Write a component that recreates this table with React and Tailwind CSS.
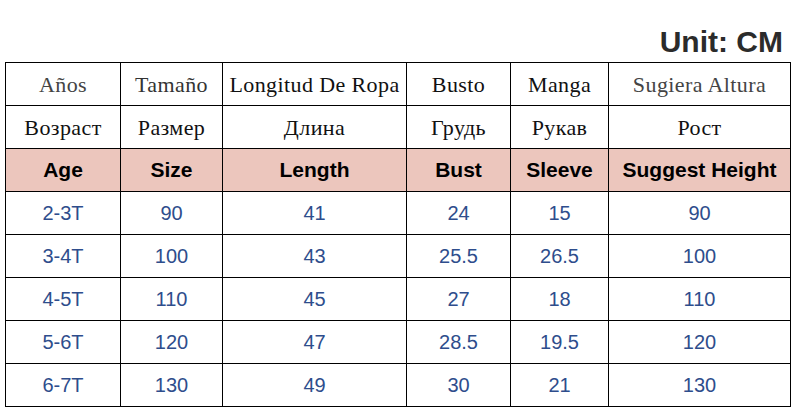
const spanish = ["Años", "Tamaño", "Longitud De Ropa", "Busto", "Manga", "Sugiera Altura"];
const russian = ["Возраст", "Размер", "Длина", "Грудь", "Рукав", "Рост"];
const english = ["Age", "Size", "Length", "Bust", "Sleeve", "Suggest Height"];

const rows = [
  ["2-3T", "90", "41", "24", "15", "90"],
  ["3-4T", "100", "43", "25.5", "26.5", "100"],
  ["4-5T", "110", "45", "27", "18", "110"],
  ["5-6T", "120", "47", "28.5", "19.5", "120"],
  ["6-7T", "130", "49", "30", "21", "130"],
];

const cell = "h-[43px] border-r border-b border-black flex items-center justify-center whitespace-nowrap";

function SerifRow({ items, tone }) {
  return items.map((t, i) => (
    <div
      key={t}
      className={`${cell} font-['Liberation_Serif',serif] text-[22px] tracking-[0.4px] ${tone[i]}`}
    >
      {t}
    </div>
  ));
}

export default function App() {
  return (
    <div className="w-[794px] h-[410px] bg-white overflow-hidden">
      <div className="h-[62px] flex items-end justify-end pr-[11px] pb-[5px]">
        <span className="font-['Liberation_Sans',Arial,sans-serif] font-bold text-[30px] leading-[30px] text-[#2b2b2b]">
          Unit: CM
        </span>
      </div>
      <div className="ml-[5px] w-[786px] grid grid-cols-[115px_102px_184px_104px_98px_182px] border-l border-t border-black">
        <SerifRow
          items={spanish}
          tone={["text-[#444]", "text-[#333]", "text-[#111]", "text-[#111]", "text-[#111]", "text-[#444]"]}
        />
        <SerifRow items={russian} tone={Array(6).fill("text-[#111]")} />
        {english.map((t) => (
          <div
            key={t}
            className={`${cell} bg-[#ecc6bd] font-['Liberation_Sans',Arial,sans-serif] font-bold text-[21px] text-black`}
          >
            {t}
          </div>
        ))}
        {rows.map((r, ri) =>
          r.map((v, ci) => (
            <div
              key={`${ri}-${ci}`}
              className={`${cell} font-['Liberation_Sans',Arial,sans-serif] text-[20px] text-[#2e4d8c]`}
            >
              {v}
            </div>
          ))
        )}
      </div>
    </div>
  );
}
